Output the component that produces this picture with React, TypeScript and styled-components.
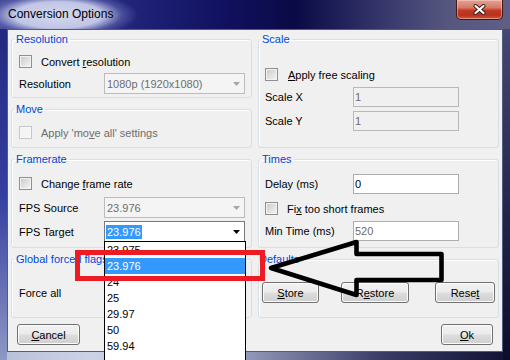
import React from "react";
import styled, { createGlobalStyle } from "styled-components";

const GlobalStyle = createGlobalStyle`
  html, body { margin: 0; padding: 0; width: 510px; height: 360px; overflow: hidden; background: #fff; }
  body { font-family: "Liberation Sans", Arial, sans-serif; font-size: 11px; color: #000; }
  * { box-sizing: border-box; }
`;

const Window = styled.div`
  position: relative;
  width: 510px;
  height: 360px;
  display: flex;
  flex-direction: column;
  overflow: hidden;
  background:
    linear-gradient(180deg, #1f2679 0%, #3440a0 55%, #8e98c4 100%) left top / 7px 100% no-repeat,
    linear-gradient(180deg, #4b4c78 0%, #23244a 60%, #0d0d2a 100%) right top / 7px 100% no-repeat,
    linear-gradient(90deg, #b7bfd9 0%, #cdd3e6 18%, #9da4c4 45%, #3a3b66 75%, #111233 100%);
`;

const TitleBar = styled.div`
  flex: 0 0 29px;
  display: flex;
  justify-content: space-between;
  align-items: flex-start;
  background:
    radial-gradient(ellipse 80px 24px at 58px 15px, rgba(212, 216, 240, 1) 0%, rgba(200, 205, 234, 0.95) 55%, rgba(120, 126, 196, 0.45) 80%, rgba(40, 40, 130, 0) 100%),
    linear-gradient(90deg, #3d4294 0%, #1e2176 28%, #10105e 45%, #0a0a46 58%, #34346a 74%, #56577f 88%, #5e5f86 100%);
`;

const Title = styled.span`
  font-size: 12px;
  line-height: 29px;
  padding-left: 8px;
  color: #000;
`;

const CloseButton = styled.div`
  width: 47px;
  height: 20px;
  margin-right: 7px;
  border: 1px solid #4a1410;
  border-top: none;
  border-radius: 0 0 5px 5px;
  background: linear-gradient(180deg, #e2a496 0%, #d57a66 40%, #c23a22 55%, #b8311c 80%, #cd5a40 100%);
  box-shadow: inset 0 0 0 1px rgba(255, 220, 210, 0.45);
  display: flex;
  align-items: center;
  justify-content: center;
`;

const Client = styled.div`
  flex: 0 0 323px;
  margin: 0 7px;
  border: 1px solid #555b7c;
  background: #f0f0f0;
  display: flex;
  flex-direction: column;
  padding: 3px 3px 0 3px;
`;

const Groups = styled.div`
  display: grid;
  grid-template-columns: 241px 241px;
  grid-template-rows: 115px 95px 65px;
  column-gap: 6px;
  row-gap: 5px;
`;

const Stack = styled.div`
  display: flex;
  flex-direction: column;
  gap: 5px;
`;

const Group = styled.fieldset<{ $pt: number; $pl?: number; $h?: number }>`
  margin: 0;
  min-width: 0;
  min-inline-size: 0;
  border: 1px solid #d5dfe5;
  border-radius: 3px;
  box-shadow: inset 1px 1px 0 #fff;
  padding: ${(p) => p.$pt}px 6px 0 ${(p) => p.$pl ?? 7}px;
  display: flex;
  flex-direction: column;
  ${(p) => (p.$h ? `height: ${p.$h}px; flex: 0 0 ${p.$h}px;` : "height: 100%;")}
`;

const Legend = styled.legend`
  color: #0046d5;
  font-size: 11px;
  line-height: 12px;
  padding: 0 2px;
  margin-left: -5px;
`;

const Row = styled.div<{ $h?: number; $mt?: number }>`
  display: flex;
  align-items: center;
  height: ${(p) => p.$h ?? 21}px;
  flex: 0 0 ${(p) => p.$h ?? 21}px;
  margin-top: ${(p) => p.$mt ?? 0}px;
`;

const FieldLabel = styled.span<{ $w: number; $disabled?: boolean }>`
  flex: 0 0 ${(p) => p.$w}px;
  color: ${(p) => (p.$disabled ? "#6d6d6d" : "#000")};
  white-space: nowrap;
`;

const CheckBox = styled.span<{ $disabled?: boolean }>`
  flex: 0 0 13px;
  width: 13px;
  height: 13px;
  border: 1px solid ${(p) => (p.$disabled ? "#c6c6c6" : "#8e8f8f")};
  background: ${(p) =>
    p.$disabled ? "#f4f4f4" : "linear-gradient(135deg, #c8c8c8 0%, #e2e2e2 55%, #f6f6f6 100%)"};
  box-shadow: inset 0 0 0 1px ${(p) => (p.$disabled ? "#f8f8f8" : "#f3f3f3")};
`;

const CheckLabel = styled.span<{ $disabled?: boolean }>`
  margin-left: 9px;
  color: ${(p) => (p.$disabled ? "#6d6d6d" : "#000")};
  white-space: nowrap;
`;

const U = styled.span`
  text-decoration: underline;
`;

const Combo = styled.div<{ $disabled?: boolean }>`
  position: relative;
  flex: 0 0 141px;
  width: 141px;
  height: 21px;
  border: 1px solid ${(p) => (p.$disabled ? "#bcbcbc" : "#7a7a7a")};
  background: ${(p) => (p.$disabled ? "#f4f4f4" : "#fff")};
  color: ${(p) => (p.$disabled ? "#6d6d6d" : "#000")};
  display: flex;
  align-items: center;
  padding-left: 1px;
`;

const ComboText = styled.span<{ $selected?: boolean }>`
  padding: 0 1px;
  line-height: 14px;
  background: ${(p) => (p.$selected ? "#3399ff" : "transparent")};
  color: ${(p) => (p.$selected ? "#fff" : "inherit")};
  white-space: nowrap;
`;

const ArrowIcon = styled.svg`
  margin-left: auto;
  margin-right: 4px;
  flex: 0 0 7px;
`;

const DropList = styled.div`
  position: absolute;
  left: -1px;
  top: 100%;
  width: 142px;
  height: 140px;
  border: 1px solid #000;
  background: #fff;
  z-index: 10;
  display: flex;
  flex-direction: column;
`;

const DropItem = styled.div<{ $selected?: boolean }>`
  flex: 0 0 16px;
  height: 16px;
  line-height: 16px;
  padding-left: 2px;
  color: ${(p) => (p.$selected ? "#fff" : "#000")};
  background: ${(p) => (p.$selected ? "#3399ff" : "transparent")};
`;

const TextBox = styled.div<{ $disabled?: boolean; $muted?: boolean }>`
  flex: 0 0 106px;
  width: 106px;
  height: 20px;
  border: 1px solid ${(p) => (p.$disabled ? "#b8b8b8" : "#abadb3")};
  background: ${(p) => (p.$disabled ? "#f0f0f0" : "#fff")};
  color: ${(p) => (p.$disabled || p.$muted ? "#6d6d6d" : "#000")};
  display: flex;
  align-items: center;
  padding-left: 1px;
`;

const Button = styled.div<{ $w: number; $ml?: number }>`
  flex: 0 0 ${(p) => p.$w}px;
  width: ${(p) => p.$w}px;
  height: 21px;
  margin-left: ${(p) => p.$ml ?? 0}px;
  border: 1px solid #707070;
  border-radius: 3px;
  background: linear-gradient(180deg, #f2f2f2 0%, #ebebeb 48%, #dddddd 52%, #cfcfcf 100%);
  box-shadow: inset 0 0 0 1px #fbfbfb;
  display: flex;
  align-items: center;
  justify-content: center;
  color: #000;
`;

const ButtonBar = styled.div`
  display: flex;
  justify-content: space-between;
  align-items: center;
  margin-top: 6px;
  padding: 0 6px;
`;

const RedBox = styled.div`
  position: absolute;
  left: 75px;
  top: 250px;
  width: 190px;
  height: 31px;
  border: 5px solid #ed1c24;
  z-index: 20;
`;

const ArrowOverlay = styled.svg`
  position: absolute;
  left: 262px;
  top: 232px;
  z-index: 20;
`;

const DropArrow = ({ color }: { color: string }) => (
  <ArrowIcon width="7" height="4" viewBox="0 0 7 4">
    <polygon points="0,0 7,0 3.5,4" fill={color} />
  </ArrowIcon>
);

const fpsOptions = ["23.975", "23.976", "24", "25", "29.97", "50", "59.94"];

export default function App() {
  return (
    <>
      <GlobalStyle />
      <Window>
        <TitleBar>
          <Title>Conversion Options</Title>
          <CloseButton>
            <svg width="13" height="11" viewBox="0 0 13 11">
              <path d="M2.5 2 L10.5 9 M10.5 2 L2.5 9" stroke="#3a1a1a" strokeWidth="4" strokeLinecap="round" />
              <path d="M2.5 2 L10.5 9 M10.5 2 L2.5 9" stroke="#ffffff" strokeWidth="2.2" strokeLinecap="round" />
            </svg>
          </CloseButton>
        </TitleBar>
        <Client>
          <Groups>
            <Stack>
              <Group $pt={10} $h={65}>
                <Legend>Resolution</Legend>
                <Row $h={13}>
                  <CheckBox />
                  <CheckLabel>
                    Convert <U>r</U>esolution
                  </CheckLabel>
                </Row>
                <Row $mt={5}>
                  <FieldLabel $w={85}>Resolution</FieldLabel>
                  <Combo $disabled>
                    <ComboText>1080p (1920x1080)</ComboText>
                    <DropArrow color="#a5a5a5" />
                  </Combo>
                </Row>
              </Group>
              <Group $pt={11} $h={45}>
                <Legend>Move</Legend>
                <Row $h={13}>
                  <CheckBox $disabled />
                  <CheckLabel $disabled>
                    Apply 'mo<U>v</U>e all' settings
                  </CheckLabel>
                </Row>
              </Group>
            </Stack>
            <Group $pt={23} $pl={6}>
              <Legend>Scale</Legend>
              <Row $h={13}>
                <CheckBox />
                <CheckLabel style={{ marginLeft: 10 }}>
                  <U>A</U>pply free scaling
                </CheckLabel>
              </Row>
              <Row $h={20} $mt={6}>
                <FieldLabel $w={88}>Scale X</FieldLabel>
                <TextBox $disabled>1</TextBox>
              </Row>
              <Row $h={20} $mt={4}>
                <FieldLabel $w={88}>Scale Y</FieldLabel>
                <TextBox $disabled>1</TextBox>
              </Row>
            </Group>

            <Group $pt={12}>
              <Legend>Framerate</Legend>
              <Row $h={13}>
                <CheckBox />
                <CheckLabel>
                  Change <U>f</U>rame rate
                </CheckLabel>
              </Row>
              <Row $mt={7}>
                <FieldLabel $w={85}>FPS Source</FieldLabel>
                <Combo $disabled>
                  <ComboText>23.976</ComboText>
                  <DropArrow color="#a5a5a5" />
                </Combo>
              </Row>
              <Row $mt={3}>
                <FieldLabel $w={85}>FPS Target</FieldLabel>
                <Combo>
                  <ComboText $selected>23.976</ComboText>
                  <DropArrow color="#000" />
                  <DropList>
                    {fpsOptions.map((o) => (
                      <DropItem key={o} $selected={o === "23.976"}>
                        {o}
                      </DropItem>
                    ))}
                  </DropList>
                </Combo>
              </Row>
            </Group>
            <Group $pt={9} $pl={6}>
              <Legend>Times</Legend>
              <Row $h={20}>
                <FieldLabel $w={88}>Delay (ms)</FieldLabel>
                <TextBox>0</TextBox>
              </Row>
              <Row $h={13} $mt={8}>
                <CheckBox />
                <CheckLabel>
                  Fi<U>x</U> too short frames
                </CheckLabel>
              </Row>
              <Row $h={20} $mt={6}>
                <FieldLabel $w={88}>Min Time (ms)</FieldLabel>
                <TextBox $muted>520</TextBox>
              </Row>
            </Group>

            <Group $pt={17}>
              <Legend>Global forced flags</Legend>
              <Row>
                <FieldLabel $w={85}>Force all</FieldLabel>
                <Combo>
                  <ComboText></ComboText>
                  <DropArrow color="#000" />
                </Combo>
              </Row>
            </Group>
            <Group $pt={17} $pl={3}>
              <Legend>Defaults</Legend>
              <Row>
                <Button $w={57}>
                  <span>
                    <U>S</U>tore
                  </span>
                </Button>
                <Button $w={68} $ml={22}>
                  <span>
                    R<U>e</U>store
                  </span>
                </Button>
                <Button $w={60} $ml={26}>
                  <span>
                    Rese<U>t</U>
                  </span>
                </Button>
              </Row>
            </Group>
          </Groups>
          <ButtonBar>
            <Button $w={63}>
              <span>
                <U>C</U>ancel
              </span>
            </Button>
            <Button $w={52}>
              <span>
                <U>O</U>k
              </span>
            </Button>
          </ButtonBar>
        </Client>
        <RedBox />
        <ArrowOverlay width="190" height="72" viewBox="0 0 190 72">
          <polygon
            points="9,36 94.5,10 94.5,22 179.5,22 179.5,48 94.5,48 94.5,63"
            fill="none"
            stroke="#000"
            strokeWidth="4.6"
            strokeLinejoin="round"
          />
        </ArrowOverlay>
      </Window>
    </>
  );
}
